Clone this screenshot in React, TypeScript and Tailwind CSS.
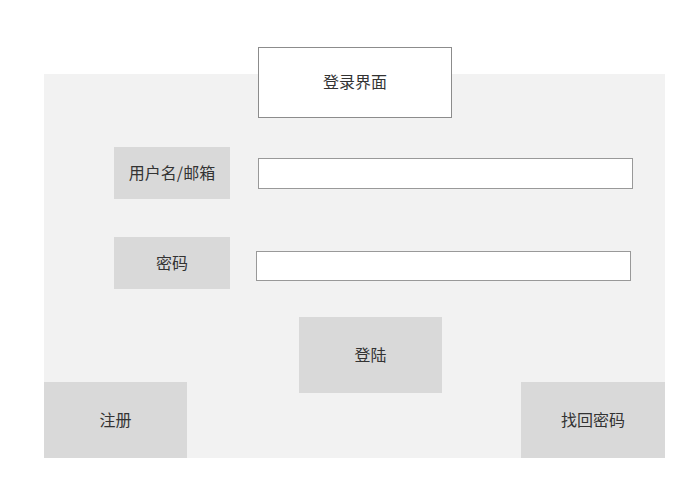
import React from 'react';

const font = { fontFamily: '"Microsoft YaHei", "Noto Sans CJK SC", sans-serif' };

const App: React.FC = () => {
  return (
    <div className="w-[693px] h-[503px] bg-white text-[#333] text-[16px]" style={font}>
      <div className="pt-[47px] pl-[44px]">
        {/* Title */}
        <div className="relative z-10 ml-[214px] -mb-[44px] w-[194px] h-[71px] pb-[3px] bg-white border border-[#8c8c8c] flex items-center justify-center">
          登录界面
        </div>

        {/* Panel */}
        <div className="w-[621px] h-[384px] bg-[#f2f2f2] pt-[73px] flex flex-col">
          <div className="flex items-start shrink-0">
            <div className="ml-[70px] w-[116px] h-[52px] pb-[2px] bg-[#d9d9d9] flex items-center justify-center">
              用户名/邮箱
            </div>
            <div className="ml-[28px] mt-[11px] w-[375px] h-[31px] bg-white border border-[#999]" />
          </div>

          <div className="flex items-start shrink-0 mt-[38px]">
            <div className="ml-[70px] w-[116px] h-[52px] pb-[2px] bg-[#d9d9d9] flex items-center justify-center">
              密码
            </div>
            <div className="ml-[26px] mt-[14px] w-[375px] h-[30px] bg-white border border-[#999]" />
          </div>

          <div className="shrink-0 mt-[28px] ml-[255px] w-[143px] h-[76px] pb-[2px] bg-[#d9d9d9] flex items-center justify-center">
            登陆
          </div>

          <div className="shrink-0 -mt-[11px] flex justify-between">
            <div className="w-[143px] h-[76px] pb-[3px] bg-[#d9d9d9] flex items-center justify-center">注册</div>
            <div className="w-[144px] h-[76px] pb-[2px] bg-[#d9d9d9] flex items-center justify-center">找回密码</div>
          </div>
        </div>
      </div>
    </div>
  );
};

export default App;
